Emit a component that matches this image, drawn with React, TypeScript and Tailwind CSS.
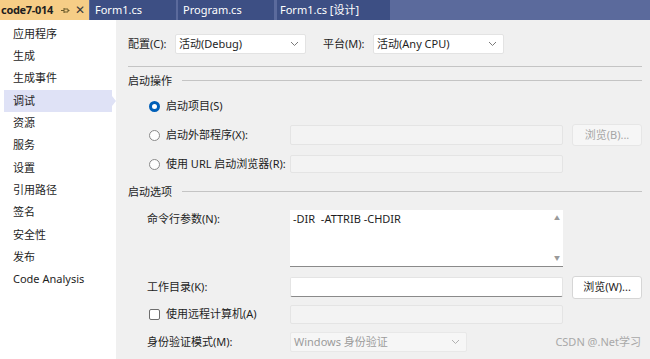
import React from "react";

const font = { fontFamily: '"Noto Sans", "Noto Sans CJK SC", sans-serif' };

const navItems = [
  "应用程序",
  "生成",
  "生成事件",
  "调试",
  "资源",
  "服务",
  "设置",
  "引用路径",
  "签名",
  "安全性",
  "发布",
  "Code Analysis",
];

const Chevron = ({ color = "#7a7a7a" }: { color?: string }) => (
  <svg width="9" height="6" viewBox="0 0 9 6">
    <path d="M1 1 L4.5 4.5 L8 1" fill="none" stroke={color} strokeWidth="1" />
  </svg>
);

// sideways pin, like the VS tab pin
const Pin = () => (
  <svg width="9" height="7" viewBox="0 0 9 7">
    <path d="M0 3.5 H3 M3 1 V6 M3 2 H7 V5 H3 M7 3.5 H8.5" fill="none" stroke="#6b5a2a" strokeWidth="1" />
  </svg>
);

const Select = ({ value, width }: { value: string; width: string }) => (
  <div
    className={`${width} h-[20px] bg-white border border-[#e3e3e3] rounded-[2px] flex items-center justify-between pl-[3px] pr-[6px] text-[11px] text-[#1e1e1e]`}
  >
    <span>{value}</span>
    <Chevron />
  </div>
);

const SectionTitle = ({ title }: { title: string }) => (
  <div className="flex items-center gap-[10px] h-[14px]">
    <span className="text-[11px] text-[#1e1e1e] leading-none">{title}</span>
    <div className="flex-1 h-px bg-[#c4c4c4]" />
  </div>
);

const Radio = ({ checked, label }: { checked?: boolean; label: string }) => (
  <div className="w-[162px] flex items-center gap-[6px] pl-[21px] shrink-0">
    {checked ? (
      <div className="w-[11px] h-[11px] shrink-0 rounded-full border-[3px] border-[#005fb8] bg-white" />
    ) : (
      <div className="w-[11px] h-[11px] shrink-0 rounded-full border border-[#8a8a8a] bg-white" />
    )}
    <span className="text-[11px] text-[#1e1e1e] whitespace-nowrap">{label}</span>
  </div>
);

const DisabledInput = ({ h }: { h: string }) => (
  <div className={`w-[273px] ${h} shrink-0 bg-[#f3f3f3] border border-[#e4e4e4] rounded-[2px]`} />
);

export default function App() {
  return (
    <div className="w-[650px] h-[359px] overflow-hidden flex flex-col bg-[#f0f0f0]" style={font}>
      {/* tab strip */}
      <div className="h-[20px] flex bg-[#5b6a9c] shrink-0">
        <div className="w-[89px] shrink-0 bg-[#f6cd86] flex items-center pl-[1px] text-[11px] whitespace-nowrap overflow-hidden">
          <span className="font-bold text-[#1e1e1e] tracking-[-0.3px]">code7-014</span>
          <span className="ml-[8px] flex items-center">
            <Pin />
          </span>
          <span className="ml-[5px] text-[12px] text-[#3a3a3a] leading-none">✕</span>
        </div>
        <div className="ml-[1px] w-[86px] bg-[#3d4f84] flex items-center pl-[5px] text-[11px] text-white">
          Form1.cs
        </div>
        <div className="ml-[2px] w-[96px] bg-[#3d4f84] flex items-center pl-[5px] text-[11px] text-white">
          Program.cs
        </div>
        <div className="ml-[3px] w-[113px] bg-[#3d4f84] flex items-center pl-[3px] text-[11px] text-white">
          Form1.cs [设计]
        </div>
      </div>

      <div className="flex flex-1">
        {/* left nav */}
        <div className="w-[116px] bg-white pt-[3px] shrink-0">
          {navItems.map((item) => (
            <div key={item} className="relative h-[22.3px] flex items-center">
              {item === "调试" && (
                <>
                  <div className="absolute left-[4px] right-[4px] top-0 bottom-0 bg-[#dfe2f6]" />
                  <div className="absolute right-0 top-[6px] w-0 h-0 border-y-[5px] border-y-transparent border-l-[4px] border-l-[#dfe2f6]" />
                </>
              )}
              <span className="relative pl-[13px] text-[11px] text-[#1e1e1e]">{item}</span>
            </div>
          ))}
        </div>

        {/* content */}
        <div className="flex-1 flex flex-col pl-[12px] pr-[9px] pt-[14px] bg-[#f0f0f0]">
          <div className="flex items-center h-[20px]">
            <span className="w-[47px] text-[11px] text-[#1e1e1e]">配置(C):</span>
            <Select value="活动(Debug)" width="w-[131px]" />
            <span className="ml-[17px] w-[50px] text-[11px] text-[#1e1e1e]">平台(M):</span>
            <Select value="活动(Any CPU)" width="w-[131px]" />
          </div>
          <div className="mt-[12px] h-px bg-[#c4c4c4]" />

          <div className="mt-[6px]">
            <SectionTitle title="启动操作" />
          </div>

          <div className="mt-[9px] flex items-center h-[20px]">
            <Radio checked label="启动项目(S)" />
          </div>

          <div className="mt-[8px] flex items-center h-[22px]">
            <Radio label="启动外部程序(X):" />
            <DisabledInput h="h-[20px]" />
            <div className="ml-[9px] w-[70px] h-[22px] bg-[#f6f6f6] border border-[#e6e6e6] rounded-[3px] flex items-center justify-center text-[11px] text-[#a6a6a6]">
              浏览(B)...
            </div>
          </div>

          <div className="mt-[9px] flex items-center h-[18px]">
            <Radio label="使用 URL 启动浏览器(R):" />
            <DisabledInput h="h-[18px]" />
          </div>

          <div className="mt-[11px]">
            <SectionTitle title="启动选项" />
          </div>

          <div className="mt-[12px] flex h-[57px]">
            <span className="w-[162px] pl-[19px] pt-[1px] text-[11px] text-[#1e1e1e]">命令行参数(N):</span>
            <div className="w-[273px] h-[57px] bg-white border-b border-b-[#8a8a8a] flex justify-between">
              <span className="pl-[3px] pt-[1px] text-[11px] text-[#1e1e1e]">-DIR&nbsp;&nbsp;-ATTRIB -CHDIR</span>
              <div className="w-[12px] flex flex-col items-center justify-between py-[5px] text-[6px] text-[#9a9a9a] leading-none">
                <span>▲</span>
                <span>▼</span>
              </div>
            </div>
          </div>

          <div className="mt-[9px] flex items-center h-[22px]">
            <span className="w-[162px] pl-[19px] text-[11px] text-[#1e1e1e]">工作目录(K):</span>
            <div className="w-[273px] h-[20px] bg-white border border-[#e4e4e4] border-b-[#8a8a8a] rounded-[2px]" />
            <div className="ml-[9px] w-[70px] h-[23px] bg-white border border-[#d6d6d6] rounded-[3px] flex items-center justify-center text-[11px] text-[#1e1e1e]">
              浏览(W)...
            </div>
          </div>

          <div className="mt-[7px] flex items-center h-[19px]">
            <div className="w-[162px] flex items-center pl-[21px] gap-[6px]">
              <div className="w-[11px] h-[11px] border border-[#6e6e6e] rounded-[2px] bg-white" />
              <span className="text-[11px] text-[#1e1e1e]">使用远程计算机(A)</span>
            </div>
            <DisabledInput h="h-[19px]" />
          </div>

          <div className="mt-[8px] flex items-center h-[20px]">
            <span className="w-[162px] pl-[19px] text-[11px] text-[#1e1e1e]">身份验证模式(M):</span>
            <div className="w-[177px] h-[20px] bg-[#f6f6f6] border border-[#e8e8e8] rounded-[2px] flex items-center justify-between pl-[3px] pr-[6px] text-[11px] text-[#9c9c9c]">
              <span>Windows 身份验证</span>
              <Chevron color="#b0b0b0" />
            </div>
            <span className="ml-auto mr-[1px] text-[11px] text-[#a8a8a8]">CSDN @.Net学习</span>
          </div>
        </div>
      </div>
    </div>
  );
}
